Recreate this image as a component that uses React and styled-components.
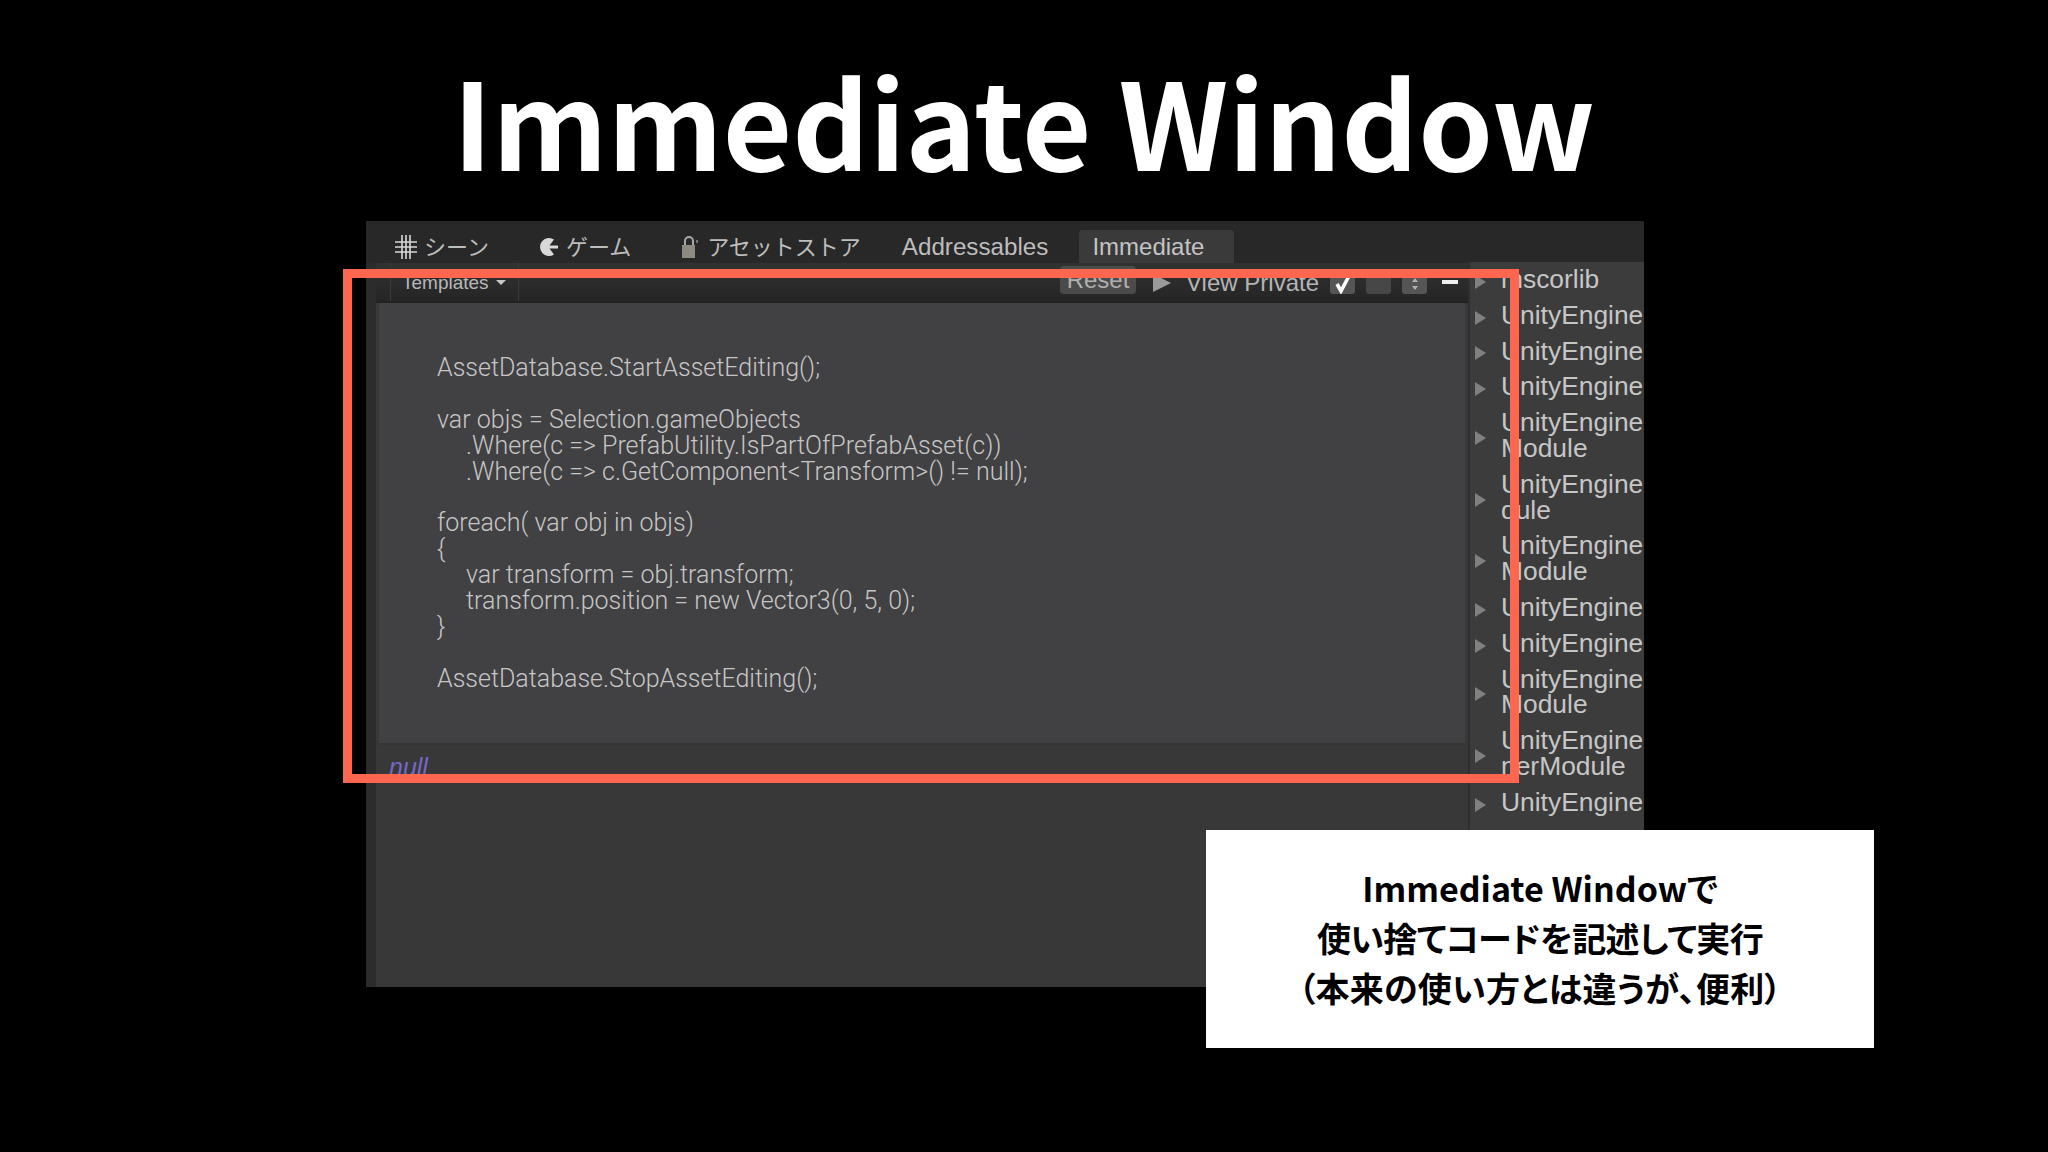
import React from 'react';
import styled, { createGlobalStyle } from 'styled-components';

const Global = createGlobalStyle`
  html, body { margin: 0; padding: 0; background: #000; }
`;

const Slide = styled.div`
  position: relative;
  width: 2048px;
  height: 1152px;
  overflow: hidden;
  background: #000;
  font-family: "Liberation Sans", "Noto Sans CJK JP", sans-serif;
`;

const Title = styled.h1`
  display: flex;
  justify-content: center;
  align-items: center;
  height: 221px;
  margin: 0;
  padding-top: 16px;
  box-sizing: border-box;
  color: #fff;
  font-family: "Noto Sans CJK JP", sans-serif;
  font-weight: 700;
  font-size: 119.6px;
  line-height: 1;
`;

const Win = styled.div`
  display: flex;
  flex-direction: column;
  width: 1278px;
  height: 766px;
  margin-left: 366px;
  background: #282828;
  overflow: hidden;
`;

const TabBar = styled.div`
  display: flex;
  align-items: flex-end;
  height: 42px;
  flex: none;
  padding-left: 28px;
  background: #282828;
`;

const Tab = styled.div`
  display: flex;
  align-items: center;
  gap: ${p => p.$gap || 6}px;
  height: 33px;
  margin-right: ${p => p.$right || 50}px;
  color: #bdbdbd;
  font-family: "Noto Sans CJK JP", sans-serif;
  font-size: 22px;
`;

const JpLabel = styled.span`
  padding-bottom: 4px;
`;

const TabLabel = styled.span`
  margin-left: -1px;
  font-family: "Liberation Sans", sans-serif;
  font-size: 24.2px;
`;

const ActiveTab = styled.div`
  display: flex;
  align-items: center;
  width: 155px;
  height: 33px;
  padding-left: 13px;
  box-sizing: border-box;
  border-radius: 3px 3px 0 0;
  background: #3a3a3a;
  color: #c4c4c4;
  font-size: 24px;
`;

const Body = styled.div`
  display: flex;
  flex: 1;
  min-height: 0;
`;

const Gutter = styled.div`
  width: 10px;
  flex: none;
  background: #2c2c2c;
`;

const Main = styled.div`
  display: flex;
  flex-direction: column;
  width: 1092px;
  flex: none;
  background: #383838;
`;

const Toolbar = styled.div`
  display: flex;
  align-items: center;
  height: 40px;
  flex: none;
  padding-left: 14px;
  background: linear-gradient(#323232, #252525);
  border-bottom: 2px solid #222;
  box-sizing: border-box;
`;

const Dropdown = styled.div`
  display: flex;
  align-items: center;
  gap: 7px;
  width: 129px;
  height: 100%;
  padding-left: 11px;
  padding-top: 1px;
  box-sizing: border-box;
  border-left: 1px solid #3a3a3a;
  border-right: 1px solid #3a3a3a;
  color: #b8b8b8;
  font-size: 19px;
`;

const Caret = styled.i`
  width: 0;
  height: 0;
  border-left: 5px solid transparent;
  border-right: 5px solid transparent;
  border-top: 5px solid #c8c8c8;
`;

const Spacer = styled.div`
  flex: 1;
`;

const ResetBtn = styled.div`
  display: flex;
  align-items: center;
  justify-content: center;
  width: 76px;
  height: 28px;
  margin-top: -5px;
  border-radius: 4px;
  background: #4b4b4b;
  color: #b0b0b0;
  font-size: 24px;
`;

const PlayIcon = styled.i`
  width: 0;
  height: 0;
  margin: 2px 15px 0 17px;
  border-top: 9px solid transparent;
  border-bottom: 9px solid transparent;
  border-left: 18px solid #9a9a9a;
`;

const ViewLabel = styled.span`
  padding-top: 2px;
  color: #b4b4b4;
  font-size: 24px;
  white-space: nowrap;
`;

const SmallBox = styled.div`
  display: flex;
  align-items: center;
  justify-content: center;
  width: ${p => p.$w || 25}px;
  height: 20px;
  margin-top: 3px;
  margin-left: ${p => p.$left || 11}px;
  border-radius: 3px;
  background: ${p => p.$bg || '#474747'};
`;

const MinusBtn = styled.i`
  width: 16px;
  height: 4px;
  margin: 0 10px 0 15px;
  background: #f0f0f0;
`;

const CodeArea = styled.div`
  height: 442px;
  flex: none;
  margin: 0 3px;
  padding: 52px 0 0 58px;
  box-sizing: border-box;
  background: #414042;
  border-bottom: 2px solid #343434;
  color: #c6c6c6;
  font-family: Roboto, "Liberation Sans", sans-serif;
  font-weight: 300;
  font-size: 25px;
  line-height: 25.9px;
`;

const CodeLine = styled.div`
  height: 25.9px;
  padding-left: ${p => (p.$indent ? 29 : 0)}px;
  white-space: pre;
`;

const NullText = styled.div`
  padding: 6px 0 0 13px;
  color: #7767c4;
  font-style: italic;
  font-size: 25px;
  line-height: 32px;
`;

const Tree = styled.div`
  flex: 1;
  min-width: 0;
  padding-top: 0;
  margin-top: -1px;
  border-left: 2px solid #2e2e2e;
  background: #3c3c3c;
  overflow: hidden;
`;

const TreeRow = styled.div`
  display: flex;
  align-items: center;
  padding: 5px 0 5px 5px;
`;

const Arrow = styled.i`
  width: 0;
  height: 0;
  flex: none;
  margin: 4px 15px 0 0;
  border-top: 7px solid transparent;
  border-bottom: 7px solid transparent;
  border-left: 11px solid #808080;
`;

const TreeText = styled.div`
  color: #c6c6c6;
  font-size: 26.4px;
  line-height: 25.8px;
  white-space: pre;
`;

const Highlight = styled.div`
  position: absolute;
  left: 343px;
  top: 269px;
  width: 1176px;
  height: 514px;
  box-sizing: border-box;
  border: 9px solid #ff6650;
`;

const Note = styled.div`
  position: absolute;
  left: 1206px;
  top: 830px;
  width: 668px;
  height: 218px;
  padding-bottom: 2px;
  box-sizing: border-box;
  display: flex;
  flex-direction: column;
  justify-content: center;
  align-items: center;
  background: #fff;
  color: #000;
  font-family: "Noto Sans CJK JP", sans-serif;
  font-weight: 700;
  font-size: 34px;
  line-height: 50px;
  font-feature-settings: "palt";
`;

const NoteLine = styled.div`
  letter-spacing: ${p => p.$track || 0}px;
`;

const code = [
  ['AssetDatabase.StartAssetEditing();'],
  [''],
  ['var objs = Selection.gameObjects'],
  ['.Where(c => PrefabUtility.IsPartOfPrefabAsset(c))', true],
  ['.Where(c => c.GetComponent<Transform>() != null);', true],
  [''],
  ['foreach( var obj in objs)'],
  ['{'],
  ['var transform = obj.transform;', true],
  ['transform.position = new Vector3(0, 5, 0);', true],
  ['}'],
  [''],
  ['AssetDatabase.StopAssetEditing();'],
];

const tree = [
  'mscorlib',
  'UnityEngine',
  'UnityEngine',
  'UnityEngine',
  'UnityEngine\nModule',
  'UnityEngine\ndule',
  'UnityEngine\nModule',
  'UnityEngine',
  'UnityEngine',
  'UnityEngine\nModule',
  'UnityEngine\nnerModule',
  'UnityEngine',
];

const GridIcon = () => (
  <svg width="24" height="26" viewBox="0 0 24 26" fill="none" stroke="#d8d8d8" strokeWidth="1.6">
    <path d="M8 1v24M12 1v24M16 1v24M1 8h22M1 13h22M1 18h22" />
  </svg>
);

const GameIcon = () => (
  <svg width="20" height="20" viewBox="0 0 20 20">
    <path d="M15 2.5A9 9 0 1 0 15 17.5L10.5 11.6H19V8.4H10.5Z" fill="#d8d8d8" />
  </svg>
);

const StoreIcon = () => (
  <svg width="18" height="24" viewBox="0 0 18 24">
    <path d="M4 10V6a4 4 0 0 1 8 0v4" fill="none" stroke="#a8a8a8" strokeWidth="2" />
    <rect x="1" y="10" width="13" height="13" fill="#8e8a80" />
    <rect x="15" y="5" width="2" height="3" fill="#777" />
  </svg>
);

const CheckIcon = () => (
  <svg width="20" height="20" viewBox="0 0 20 20">
    <path d="M4 10l4 7 8-15" fill="none" stroke="#fff" strokeWidth="3.6" />
  </svg>
);

const StepperIcon = () => (
  <svg width="8" height="14" viewBox="0 0 8 14">
    <path d="M4 1l3 4H1zM4 13l3-4H1z" fill="#b0b0b0" />
  </svg>
);

export default function App() {
  return (
    <Slide>
      <Global />
      <Title>Immediate Window</Title>
      <Win>
        <TabBar>
          <Tab><GridIcon /><JpLabel>シーン</JpLabel></Tab>
          <Tab $gap={7}><GameIcon /><JpLabel>ゲーム</JpLabel></Tab>
          <Tab $gap={8} $right={42}><StoreIcon /><JpLabel>アセットストア</JpLabel></Tab>
          <Tab $right={31}><TabLabel>Addressables</TabLabel></Tab>
          <ActiveTab>Immediate</ActiveTab>
        </TabBar>
        <Body>
          <Gutter />
          <Main>
            <Toolbar>
              <Dropdown>Templates<Caret /></Dropdown>
              <Spacer />
              <ResetBtn>Reset</ResetBtn>
              <PlayIcon />
              <ViewLabel>View Private</ViewLabel>
              <SmallBox $bg="#555"><CheckIcon /></SmallBox>
              <SmallBox />
              <SmallBox $bg="#555"><StepperIcon /></SmallBox>
              <MinusBtn />
            </Toolbar>
            <CodeArea>
              {code.map(([text, indent], i) => (
                <CodeLine key={i} $indent={indent}>{text}</CodeLine>
              ))}
            </CodeArea>
            <NullText>null</NullText>
          </Main>
          <Tree>
            {tree.map((label, i) => (
              <TreeRow key={i}>
                <Arrow />
                <TreeText>{label}</TreeText>
              </TreeRow>
            ))}
          </Tree>
        </Body>
      </Win>
      <Highlight />
      <Note>
        <NoteLine>Immediate Windowで</NoteLine>
        <NoteLine $track={-0.6}>使い捨てコードを記述して実行</NoteLine>
        <NoteLine $track={0.25}>（本来の使い方とは違うが、便利）</NoteLine>
      </Note>
    </Slide>
  );
}
